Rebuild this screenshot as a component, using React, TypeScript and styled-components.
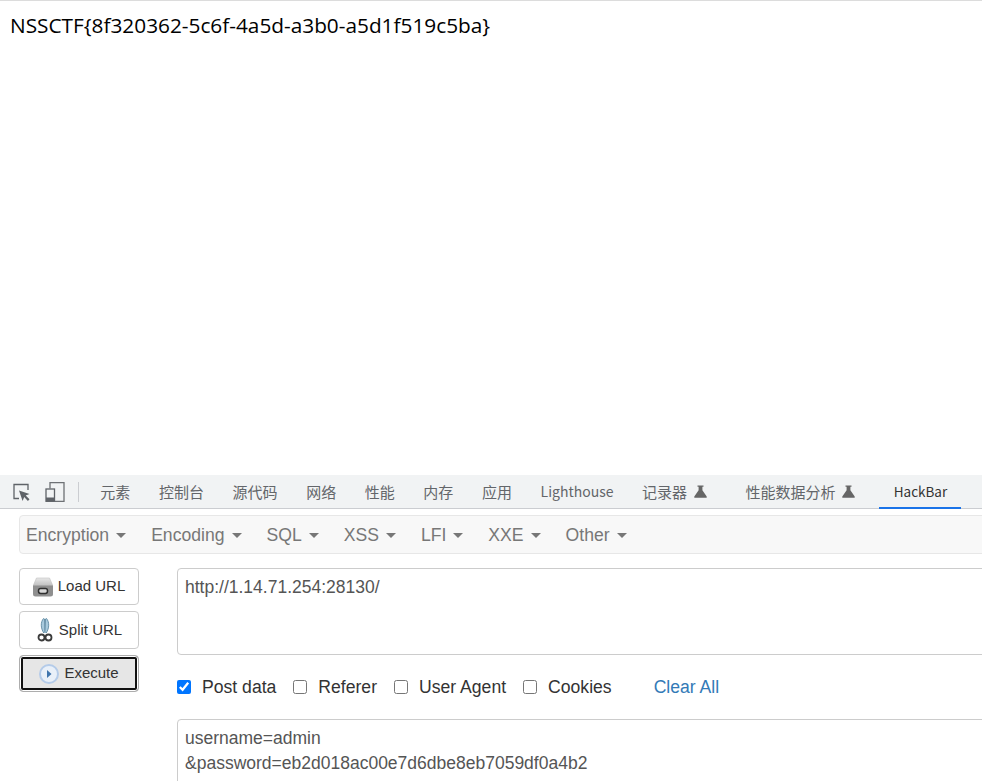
import styled, { createGlobalStyle } from "styled-components";

const GlobalStyle = createGlobalStyle`
  html, body {
    margin: 0;
    padding: 0;
    height: 100%;
    overflow: hidden;
    background: #fff;
  }
  #root {
    height: 100%;
  }
`;

const Page = styled.div`
  height: 781px;
  display: flex;
  flex-direction: column;
  border-top: 1px solid #dcdcdc;
  box-sizing: border-box;
`;

const Flag = styled.div`
  flex: 0 0 474px;
  box-sizing: border-box;
  padding: 11px 0 0 10px;
  font: 20.8px/26px "Open Sans", "Noto Sans", sans-serif;
  color: #000;
  white-space: nowrap;
`;

const TabBar = styled.div`
  flex: 0 0 34px;
  box-sizing: border-box;
  display: flex;
  align-items: center;
  background: #f1f3f4;
  border-bottom: 1px solid #cbcdd1;
  padding-left: 12px;
`;

const ToolIcon = styled.svg`
  width: 20px;
  height: 20px;
  flex: none;
  margin-right: 13px;
`;

const Divider = styled.div`
  width: 1px;
  height: 20px;
  background: #cbcdd1;
  margin-right: 7px;
`;

const Tab = styled.div<{ $active?: boolean; $latin?: boolean; $flask?: boolean }>`
  height: 33px;
  box-sizing: border-box;
  padding: 0 ${({ $flask }) => ($flask ? "24px" : "14.3px")} 0 14.3px;
  display: flex;
  align-items: center;
  gap: 7px;
  white-space: nowrap;
  font-family: "Noto Sans CJK SC", "Noto Sans", sans-serif;
  font-size: ${({ $latin, $active }) => ($active ? "13.5px" : $latin ? "14px" : "15px")};
  color: ${({ $active }) => ($active ? "#333" : "#63666a")};
  border-bottom: 2px solid ${({ $active }) => ($active ? "#1a73e8" : "transparent")};
  margin-bottom: -1px;
`;

const Panel = styled.div`
  flex: 1;
  padding: 6px 0 0 19px;
  font-family: "Liberation Sans", Arial, sans-serif;
  overflow: hidden;
`;

const MenuBar = styled.div`
  width: 1000px;
  height: 39px;
  box-sizing: border-box;
  display: flex;
  align-items: center;
  padding: 1px 0 0 6px;
  gap: 25px;
  background: #f8f8f8;
  border: 1px solid #e7e7e7;
  border-radius: 4px;
`;

const MenuItem = styled.div`
  display: flex;
  align-items: center;
  gap: 7px;
  font-size: 17.6px;
  color: #777;
`;

const Caret = styled.span`
  width: 0;
  height: 0;
  border-left: 5px solid transparent;
  border-right: 5px solid transparent;
  border-top: 5px solid #777;
  margin-top: 1px;
`;

const Body = styled.div`
  display: flex;
  gap: 38px;
  margin-top: 14px;
`;

const Buttons = styled.div`
  flex: 0 0 120px;
  display: grid;
  grid-template-rows: 37px 38px 37px;
  gap: 6px;
`;

const ActionButton = styled.div<{ $focused?: boolean }>`
  box-sizing: border-box;
  display: flex;
  align-items: center;
  justify-content: center;
  gap: 5px;
  padding-bottom: 2px;
  font-size: 15px;
  color: #333;
  border: 1px solid ${({ $focused }) => ($focused ? "#adadad" : "#ccc")};
  border-radius: 4px;
  background: ${({ $focused }) => ($focused ? "#e6e6e6" : "#fff")};
  box-shadow: ${({ $focused }) =>
    $focused ? "inset 0 0 0 1px #fff, inset 0 0 0 3px #111" : "none"};

  svg {
    margin-bottom: -2px;
  }
`;

const Fields = styled.div`
  flex: 1;
`;

const UrlBox = styled.div`
  width: 1000px;
  height: 87px;
  box-sizing: border-box;
  padding: 6px 7px;
  border: 1px solid #ccc;
  border-radius: 4px;
  font-size: 17.5px;
  line-height: 25px;
  color: #555;
`;

const Options = styled.div`
  display: flex;
  align-items: center;
  height: 24px;
  margin: 20px 0;
`;

const Option = styled.label`
  display: flex;
  align-items: center;
  gap: 11px;
  margin-right: 17px;
  font-size: 17.6px;
  color: #333;
`;

const Check = styled.input.attrs({ type: "checkbox" })`
  width: 14px;
  height: 14px;
  margin: 0;
  accent-color: #0075ff;
`;

const ClearAll = styled.a`
  margin-left: 25px;
  font-size: 17.6px;
  color: #337ab7;
`;

const PostBox = styled(UrlBox)`
  height: 120px;
`;

export default function App() {
  return (
    <Page>
      <GlobalStyle />
      <Flag>NSSCTF{"{"}8f320362-5c6f-4a5d-a3b0-a5d1f519c5ba{"}"}</Flag>
      <TabBar>
        <ToolIcon viewBox="0 0 20 20">
          <path d="M7 16.500H2V2.500h14V8" fill="none" stroke="#5f6368" strokeWidth="1.300" />
          <path d="M7 8.500l10.500 3.500-3.800 1.600 3.800 3.700-1.600 1.600-3.700-3.800-1.600 3.800z" fill="#5f6368" />
        </ToolIcon>
        <ToolIcon viewBox="0 0 20 20">
          <path d="M5 6.500V.7h14v18.600H10" fill="none" stroke="#6e7175" strokeWidth="1.300" />
          <rect x="1" y="7" width="8.500" height="12.300" fill="none" stroke="#5f6368" strokeWidth="1.300" />
          <rect x="1" y="15.500" width="8.500" height="4" fill="#5f6368" />
        </ToolIcon>
        <Divider />
        <Tab>元素</Tab>
        <Tab>控制台</Tab>
        <Tab>源代码</Tab>
        <Tab>网络</Tab>
        <Tab>性能</Tab>
        <Tab>内存</Tab>
        <Tab>应用</Tab>
        <Tab $latin>Lighthouse</Tab>
        <Tab $flask>记录器<Flask /></Tab>
        <Tab $flask>性能数据分析<Flask /></Tab>
        <Tab $active $latin>HackBar</Tab>
      </TabBar>
      <Panel>
        <MenuBar>
          {["Encryption", "Encoding", "SQL", "XSS", "LFI", "XXE", "Other"].map((name) => (
            <MenuItem key={name}>
              {name}
              <Caret />
            </MenuItem>
          ))}
        </MenuBar>
        <Body>
          <Buttons>
            <ActionButton>
              <DriveIcon />
              Load URL
            </ActionButton>
            <ActionButton>
              <ScissorsIcon />
              Split URL
            </ActionButton>
            <ActionButton $focused>
              <PlayIcon />
              Execute
            </ActionButton>
          </Buttons>
          <Fields>
            <UrlBox>http://1.14.71.254:28130/</UrlBox>
            <Options>
              <Option>
                <Check defaultChecked />
                Post data
              </Option>
              <Option>
                <Check />
                Referer
              </Option>
              <Option>
                <Check />
                User Agent
              </Option>
              <Option>
                <Check />
                Cookies
              </Option>
              <ClearAll>Clear All</ClearAll>
            </Options>
            <PostBox>
              username=admin
              <br />
              &amp;password=eb2d018ac00e7d6dbe8eb7059df0a4b2
            </PostBox>
          </Fields>
        </Body>
      </Panel>
    </Page>
  );
}

function Flask() {
  return (
    <svg width="13" height="13" viewBox="0 0 13 13">
      <path d="M3.500 0.500h6v1.200H8.400v3.600L12.700 11.500v1.200H.3v-1.200L4.600 5.300V1.700H3.500z" fill="#666" />
    </svg>
  );
}

function DriveIcon() {
  return (
    <svg width="20" height="20" viewBox="0 0 20 20">
      <defs>
        <linearGradient id="driveTop" x1="0" y1="0" x2="0" y2="1">
          <stop offset="0" stopColor="#e8e8e8" />
          <stop offset="1" stopColor="#bdbdbd" />
        </linearGradient>
      </defs>
      <path d="M3.500 1h13L20 9H0z" fill="url(#driveTop)" stroke="#c0c0c0" strokeWidth="0.600" />
      <path d="M0 8.500h20V17a2.500 2.500 0 0 1-2.500 2.500h-15A2.500 2.500 0 0 1 0 17z" fill="#8f8f8f" />
      <rect x="5.500" y="11.500" width="9" height="5" rx="2.200" fill="#d8d8d8" stroke="#2f2f2f" strokeWidth="1.500" />
    </svg>
  );
}

function ScissorsIcon() {
  return (
    <svg width="18" height="24" viewBox="0 0 18 24">
      <path d="M7.500 0.500C4.500 4 4.500 10 7.800 15L9 13.500 8.500 1z" fill="#a9cadd" stroke="#5f8aa3" strokeWidth="0.900" />
      <path d="M10.500 0.500C13.500 4 13.500 10 10.200 15L9 13.500 9.500 1z" fill="#a9cadd" stroke="#5f8aa3" strokeWidth="0.900" />
      <circle cx="5.500" cy="19.500" r="3" fill="none" stroke="#3a3a3a" strokeWidth="1.800" />
      <circle cx="12.500" cy="19.500" r="3" fill="none" stroke="#3a3a3a" strokeWidth="1.800" />
    </svg>
  );
}

function PlayIcon() {
  return (
    <svg width="20" height="20" viewBox="0 0 20 20">
      <circle cx="10" cy="10" r="9" fill="#e9f0f9" stroke="#b4cbe9" strokeWidth="2" />
      <path d="M8 6l4.500 4L8 14z" fill="#3f74ad" />
    </svg>
  );
}
